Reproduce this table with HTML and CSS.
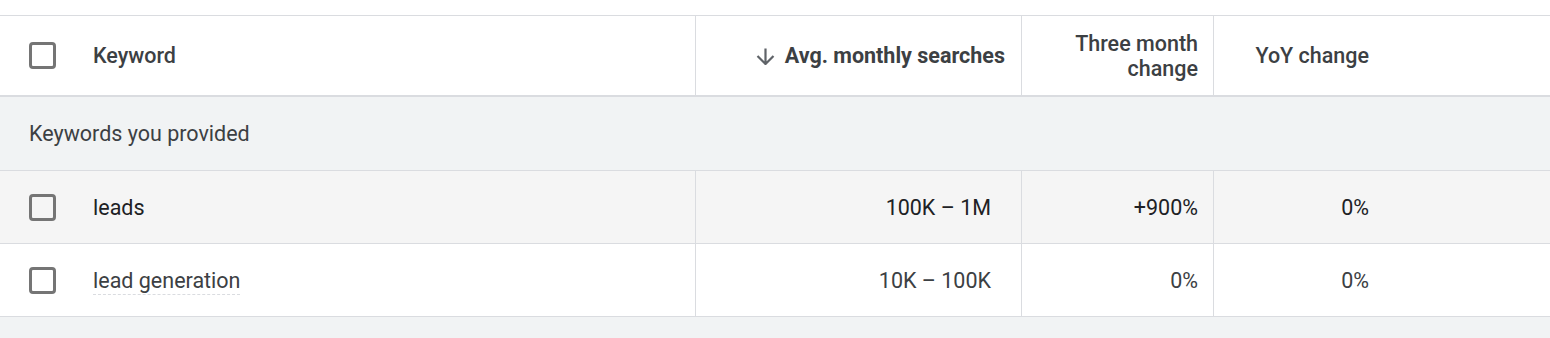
FILE: index.html
```html
<!DOCTYPE html>
<html>
<head>
<meta charset="utf-8">
<link rel="stylesheet" href="styles.css">
</head>
<body>
<div class="page">
  <div class="table">
    <div class="row head">
      <div class="cell kw"><span class="cb"></span><span class="hlabel">Keyword</span></div>
      <div class="cell num sorted">
        <svg class="arrow" width="19" height="17" viewBox="0 0 19 17"><path d="M9.5 0.5V15.5M1.5 8L9.5 16L17.5 8" fill="none" stroke="#5f6368" stroke-width="2.2"/></svg>
        <span class="hlabel strong">Avg. monthly searches</span>
      </div>
      <div class="cell num"><span class="hlabel">Three month<br>change</span></div>
      <div class="cell num last"><span class="hlabel">YoY change</span></div>
      <div class="cell fill"></div>
    </div>
    <div class="group">Keywords you provided</div>
    <div class="row data hover">
      <div class="cell kw"><span class="cb"></span><span>leads</span></div>
      <div class="cell num val">100K – 1M</div>
      <div class="cell num">+900%</div>
      <div class="cell num last">0%</div>
      <div class="cell fill"></div>
    </div>
    <div class="row data light">
      <div class="cell kw"><span class="cb"></span><span class="dashed">lead generation</span></div>
      <div class="cell num val">10K – 100K</div>
      <div class="cell num">0%</div>
      <div class="cell num last">0%</div>
      <div class="cell fill"></div>
    </div>
  </div>
  <div class="footer"></div>
</div>
</body>
</html>
```
FILE: styles.css
```css
* { box-sizing: border-box; }
html, body { margin: 0; padding: 0; background: #fff; }
body { font-family: Roboto, "Noto Sans", sans-serif; font-size: 21.5px; color: #202124; }
.page { padding-top: 15px; }
.table { border-top: 1px solid #dadce0; }
.row {
  display: grid;
  grid-template-columns: 696px 326px 192px 170px 1fr;
}
.head { height: 81px; border-bottom: 2px solid #dadce0; color: #3c4043; }
.data { height: 73px; border-bottom: 1px solid #dadce0; }
.hover { background: #f5f5f5; }
.light { color: #3c4043; }
.cell {
  display: flex;
  align-items: center;
  border-right: 1px solid #dadce0;
}
.cell.last, .cell.fill { border-right: none; }
.kw { padding-left: 29px; }
.num { justify-content: flex-end; padding-right: 15px; text-align: right; }
.num.sorted { padding-right: 16px; }
.num.val { padding-right: 30px; }
.cb {
  width: 27px;
  height: 27px;
  border: 3px solid #757575;
  border-radius: 4px;
  margin-right: 37px;
  flex: none;
}
.hlabel { font-weight: 500; line-height: 25px; }
.hlabel.strong { font-weight: 700; }
.arrow { margin-right: 10px; flex: none; position: relative; top: 1px; }
.group {
  height: 74px;
  background: #f1f3f4;
  border-bottom: 1px solid #dadce0;
  padding-left: 29px;
  display: flex;
  align-items: center;
  color: #3c4043;
}
.dashed {
  text-decoration: underline dashed #dadce0 1px;
  text-underline-offset: 6px;
}
.footer { height: 21px; background: #f1f3f4; }
```
